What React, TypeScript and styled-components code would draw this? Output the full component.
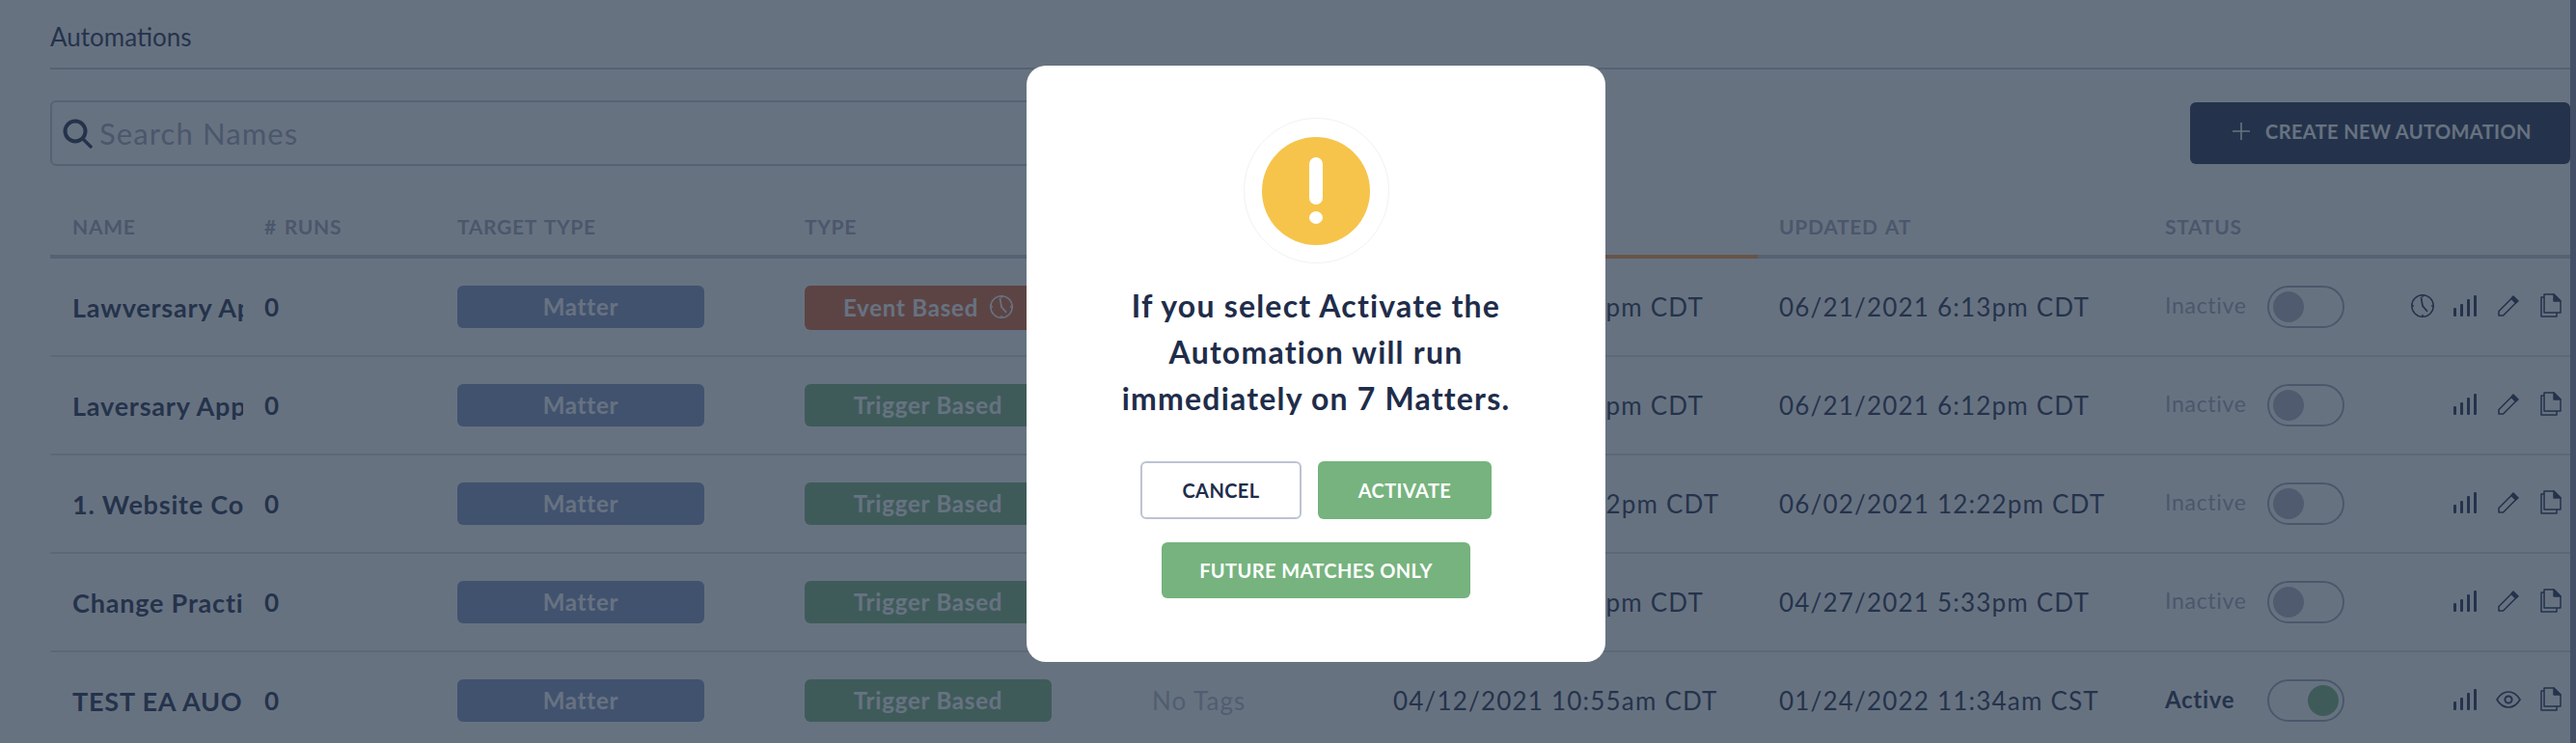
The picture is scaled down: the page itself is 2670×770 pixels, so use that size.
import React from 'react';
import styled, { createGlobalStyle } from 'styled-components';

const NAVY = '#1f2d4a';
const MUTED = '#a0a3b6';
const GREEN = '#76b37e';
const COLUMNS = '222px 200px 360px 360px 250px 400px 400px 420px';

const GlobalStyle = createGlobalStyle`
  html, body {
    margin: 0;
    height: 100%;
    overflow: hidden;
    background: #fff;
    font-family: Lato, "Open Sans", sans-serif;
    color: ${NAVY};
  }
  * { box-sizing: border-box; }
`;

const Page = styled.div`
  display: flex;
  width: 2670px;
  height: 770px;
  overflow: hidden;
`;

const Main = styled.main`
  flex: 1;
  min-width: 0;
  padding-left: 52px;
`;

const ScrollTrack = styled.div`
  width: 6px;
  background: #898ca3;
`;

const Title = styled.h1`
  margin: 0;
  height: 72px;
  padding-top: 20px;
  border-bottom: 2px solid #c5c5cf;
  font-size: 26px;
  line-height: 36px;
  font-weight: 400;
`;

const Toolbar = styled.div`
  display: flex;
  align-items: center;
  justify-content: space-between;
  margin-top: 32px;
`;

const SearchBox = styled.div`
  display: flex;
  align-items: center;
  gap: 7px;
  width: 1240px;
  height: 68px;
  padding-left: 11px;
  border: 2px solid #c5c5cf;
  border-radius: 6px;
`;

const SearchText = styled.span`
  font-size: 31px;
  letter-spacing: 1.1px;
  color: ${MUTED};
`;

const CreateButton = styled.button`
  display: flex;
  align-items: center;
  gap: 15px;
  width: 394px;
  height: 64px;
  padding: 0 0 4px 43px;
  border: 0;
  border-radius: 6px;
  background: ${NAVY};
  color: #fff;
  font-family: inherit;
  font-size: 20px;
  font-weight: 700;
  letter-spacing: 0.4px;
  white-space: nowrap;
`;

const HeadRow = styled.div`
  position: relative;
  display: grid;
  grid-template-columns: ${COLUMNS};
  align-items: center;
  height: 68px;
  margin-top: 28px;
  padding-top: 4px;
  border-bottom: 4px solid #c5c5cf;
`;

const SortMark = styled.span`
  position: absolute;
  left: 1370px;
  bottom: -4px;
  width: 400px;
  height: 4px;
  background: #ff9a3c;
`;

const HeadCell = styled.div<{ $inset?: boolean }>`
  padding-left: ${p => (p.$inset ? '23px' : '0')};
  font-size: 21px;
  font-weight: 700;
  letter-spacing: 0.7px;
  word-spacing: 2px;
  text-transform: uppercase;
  color: ${MUTED};
`;

const Row = styled.div`
  display: grid;
  grid-template-columns: ${COLUMNS};
  align-items: center;
  height: 102px;
  border-bottom: 2px solid #d9d9df;
`;

const NameCell = styled.div`
  width: 177px;
  margin-left: 23px;
  overflow: hidden;
  white-space: nowrap;
  font-size: 27px;
  font-weight: 700;
  letter-spacing: 0.8px;
`;

const Runs = styled.div`
  font-size: 26px;
  font-weight: 700;
`;

const Badge = styled.div<{ $tone: string; $tall?: boolean }>`
  display: flex;
  align-items: center;
  justify-content: center;
  gap: 12px;
  width: 256px;
  height: ${p => (p.$tall ? '46px' : '44px')};
  margin-top: ${p => (p.$tall ? '2px' : '0')};
  padding-bottom: 2px;
  border-radius: 6px;
  background: ${p => p.$tone};
  color: #fff;
  font-size: 24px;
  font-weight: 700;
  letter-spacing: 0.8px;
`;

const NoTags = styled.div`
  font-size: 26px;
  letter-spacing: 1px;
  color: #b4b7c6;
`;

const DateCell = styled.div`
  font-size: 26px;
  letter-spacing: 1.2px;
  white-space: nowrap;
`;

const StatusCell = styled.div`
  display: flex;
  align-items: center;
  padding-right: 9px;
`;

const StatusLabel = styled.span<{ $active: boolean }>`
  width: 106px;
  margin-bottom: 4px;
  font-size: ${p => (p.$active ? '24px' : '23px')};
  font-weight: ${p => (p.$active ? 700 : 400)};
  letter-spacing: 0.7px;
  color: ${p => (p.$active ? NAVY : MUTED)};
`;

const Toggle = styled.span<{ $on: boolean }>`
  display: flex;
  justify-content: ${p => (p.$on ? 'flex-end' : 'flex-start')};
  align-items: center;
  width: 80px;
  height: 44px;
  padding: 0 4px;
  border: 2px solid ${MUTED};
  border-radius: 22px;
`;

const Knob = styled.span<{ $on: boolean }>`
  width: 32px;
  height: 32px;
  border-radius: 50%;
  background: ${p => (p.$on ? GREEN : '#b1b1c1')};
`;

const Actions = styled.div`
  display: flex;
  align-items: center;
  gap: 20px;
  margin-left: auto;
  padding-bottom: 3px;
`;

const IconSlot = styled.span<{ $w: number }>`
  display: flex;
  justify-content: center;
  width: ${p => p.$w}px;
`;

const Backdrop = styled.div`
  position: fixed;
  inset: 0;
  display: flex;
  justify-content: center;
  align-items: flex-start;
  padding: 68px 0 0 58px;
  background: rgba(39, 54, 76, 0.7);
`;

const Modal = styled.div`
  display: flex;
  flex-direction: column;
  align-items: center;
  width: 600px;
  height: 618px;
  padding-top: 54px;
  border-radius: 20px;
  background: #fff;
`;

const AlertRing = styled.div`
  display: flex;
  align-items: center;
  justify-content: center;
  width: 151px;
  height: 151px;
  border: 1px solid #f2f2f2;
  border-radius: 50%;
`;

const AlertDisc = styled.div`
  display: flex;
  flex-direction: column;
  align-items: center;
  gap: 7px;
  width: 112px;
  height: 112px;
  padding-top: 21px;
  border-radius: 50%;
  background: #f6c44a;
`;

const AlertBar = styled.span`
  width: 14px;
  height: 49px;
  border-radius: 7px;
  background: #fff;
`;

const AlertDot = styled.span`
  width: 14px;
  height: 13px;
  border-radius: 50%;
  background: #fff;
`;

const Message = styled.p`
  width: 430px;
  margin: 20px 0 0;
  text-align: center;
  font-size: 32px;
  line-height: 48px;
  font-weight: 700;
  letter-spacing: 1.2px;
`;

const ButtonRow = styled.div`
  display: flex;
  gap: 17px;
  margin-top: 41px;
`;

const ModalButton = styled.button<{ $w: number; $h: number; $outline?: boolean }>`
  width: ${p => p.$w}px;
  height: ${p => p.$h}px;
  border: ${p => (p.$outline ? '2px solid #bcc3d2' : '0')};
  border-radius: 6px;
  background: ${p => (p.$outline ? '#fff' : GREEN)};
  color: ${p => (p.$outline ? NAVY : '#fff')};
  font-family: inherit;
  font-size: 20px;
  font-weight: 700;
  letter-spacing: 0.4px;
`;

const SecondRow = styled.div`
  margin-top: 24px;
`;

const SearchIcon = () => (
  <svg width="31" height="31" viewBox="0 0 31 31" fill="none" stroke={NAVY} strokeLinecap="round">
    <circle cx="13" cy="13" r="10.5" strokeWidth="4" />
    <path d="M21 21l8 8" strokeWidth="3.4" />
  </svg>
);

const PlusIcon = () => (
  <svg width="20" height="20" viewBox="0 0 20 20" stroke="#fff" strokeWidth="1.6">
    <path d="M10 1v18M1 10h18" />
  </svg>
);

const ClockIcon = ({ size = 24, color = NAVY }: { size?: number; color?: string }) => (
  <svg width={size} height={size} viewBox="0 0 24 24" fill="none" stroke={color} strokeWidth="1.5" strokeLinecap="round">
    <circle cx="12" cy="12" r="11.2" />
    <path d="M10.5 3.5l1.5 8.5 4.6 5.4" strokeWidth="1.7" />
    <path d="M12 1v1.5M12 21.5V23M1 12h1.5M21.5 12H23" />
  </svg>
);

const BarsIcon = () => (
  <svg width="24" height="22" viewBox="0 0 24 22" fill={NAVY}>
    <rect x="0" y="13" width="3" height="9" rx="1" />
    <rect x="7" y="9" width="3" height="13" rx="1" />
    <rect x="14" y="4" width="3" height="18" rx="1" />
    <rect x="21" y="0" width="3" height="22" rx="1" />
  </svg>
);

const PencilIcon = () => (
  <svg width="22" height="22" viewBox="0 0 22 22" fill="none" stroke={NAVY} strokeWidth="1.6" strokeLinejoin="round">
    <path d="M1 16.5L15.5 2l4.5 4.5L5.500 21H1z" />
    <path d="M14 3.500L16 1l5 5-2.500 2z" fill={NAVY} />
  </svg>
);

const EyeIcon = () => (
  <svg width="26" height="18" viewBox="0 0 26 18" fill="none" stroke={NAVY} strokeWidth="1.7">
    <path d="M1 9C4 4 8 1 13 1s9 3 12 8c-3 5-7 8-12 8S4 14 1 9z" strokeLinejoin="round" />
    <circle cx="13" cy="9" r="3.6" strokeWidth="2" />
  </svg>
);

const CopyIcon = () => (
  <svg width="22" height="25" viewBox="0 0 22 25" fill="none" stroke={NAVY} strokeWidth="1.5" strokeLinejoin="round">
    <path d="M4 1h10l7 7v12H4z" />
    <path d="M14 1l7 7h-7z" fill={NAVY} />
    <path d="M4 4H1v20h16v-4" />
  </svg>
);

interface Automation {
  name: string;
  type: 'event' | 'trigger';
  created: string;
  updated: string;
  active?: boolean;
}

const automations: Automation[] = [
  { name: 'Lawversary Appointment', type: 'event', created: '06/21/2021 6:13pm CDT', updated: '06/21/2021 6:13pm CDT' },
  { name: 'Laversary Appointment', type: 'trigger', created: '06/21/2021 6:12pm CDT', updated: '06/21/2021 6:12pm CDT' },
  { name: '1. Website Contact', type: 'trigger', created: '06/02/2021 12:22pm CDT', updated: '06/02/2021 12:22pm CDT' },
  { name: 'Change Practice Area', type: 'trigger', created: '04/27/2021 5:33pm CDT', updated: '04/27/2021 5:33pm CDT' },
  { name: 'TEST EA AUOMATION', type: 'trigger', created: '04/12/2021 10:55am CDT', updated: '01/24/2022 11:34am CST', active: true },
];

const App: React.FC = () => {
  return (
    <>
      <GlobalStyle />
      <Page>
        <Main>
          <Title>Automations</Title>
          <Toolbar>
            <SearchBox>
              <SearchIcon />
              <SearchText>Search Names</SearchText>
            </SearchBox>
            <CreateButton>
              <PlusIcon />
              CREATE NEW AUTOMATION
            </CreateButton>
          </Toolbar>
          <HeadRow>
            <HeadCell $inset>Name</HeadCell>
            <HeadCell># Runs</HeadCell>
            <HeadCell>Target Type</HeadCell>
            <HeadCell>Type</HeadCell>
            <HeadCell>Tags</HeadCell>
            <HeadCell>Created At</HeadCell>
            <HeadCell>Updated At</HeadCell>
            <HeadCell>Status</HeadCell>
            <SortMark />
          </HeadRow>
          {automations.map(a => (
            <Row key={a.name}>
              <NameCell>{a.name}</NameCell>
              <Runs>0</Runs>
              <div>
                <Badge $tone="#7f93c1">Matter</Badge>
              </div>
              <div>
                {a.type === 'event' ? (
                  <Badge $tone="#dc6435" $tall>
                    Event Based <ClockIcon color="#fff" />
                  </Badge>
                ) : (
                  <Badge $tone={GREEN}>Trigger Based</Badge>
                )}
              </div>
              <NoTags>No Tags</NoTags>
              <DateCell>{a.created}</DateCell>
              <DateCell>{a.updated}</DateCell>
              <StatusCell>
                <StatusLabel $active={!!a.active}>{a.active ? 'Active' : 'Inactive'}</StatusLabel>
                <Toggle $on={!!a.active}>
                  <Knob $on={!!a.active} />
                </Toggle>
                <Actions>
                  {a.type === 'event' && <ClockIcon />}
                  <BarsIcon />
                  <IconSlot $w={26}>{a.active ? <EyeIcon /> : <PencilIcon />}</IconSlot>
                  <CopyIcon />
                </Actions>
              </StatusCell>
            </Row>
          ))}
        </Main>
        <ScrollTrack />
      </Page>
      <Backdrop>
        <Modal>
          <AlertRing>
            <AlertDisc>
              <AlertBar />
              <AlertDot />
            </AlertDisc>
          </AlertRing>
          <Message>If you select Activate the Automation will run immediately on 7 Matters.</Message>
          <ButtonRow>
            <ModalButton $w={167} $h={60} $outline>CANCEL</ModalButton>
            <ModalButton $w={180} $h={60}>ACTIVATE</ModalButton>
          </ButtonRow>
          <SecondRow>
            <ModalButton $w={320} $h={58}>FUTURE MATCHES ONLY</ModalButton>
          </SecondRow>
        </Modal>
      </Backdrop>
    </>
  );
};

export default App;
